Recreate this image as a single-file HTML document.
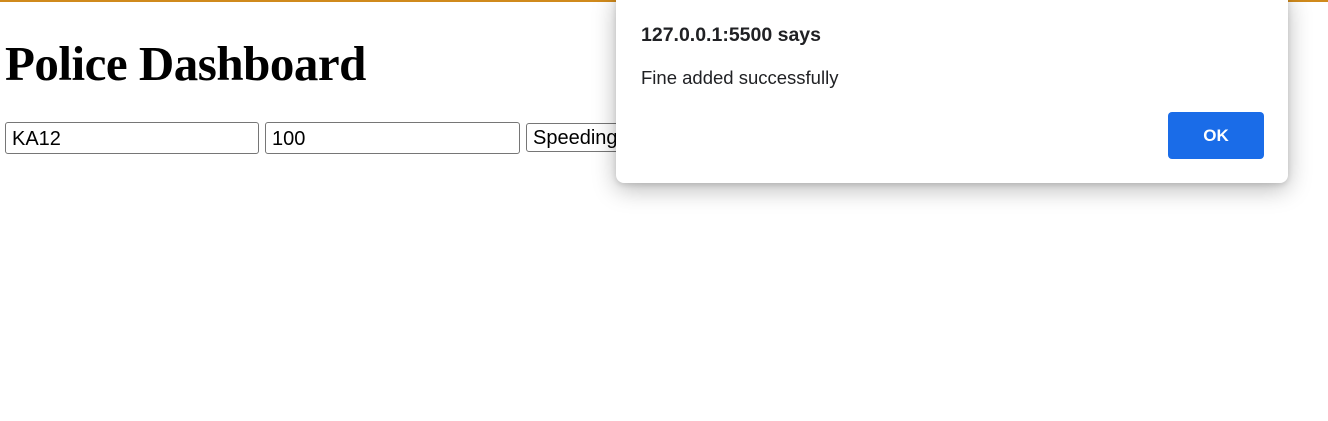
<!DOCTYPE html>
<html><head><meta charset="utf-8"><style>
html,body{margin:0;padding:0;background:#fff;width:1328px;height:421px;overflow:hidden;position:relative}
.bar{position:absolute;left:0;top:0;width:1328px;height:2px;background:#d08a1c}
h1{position:absolute;left:5px;top:39px;margin:0;font:bold 49px/1 "Liberation Serif",serif;color:#000;letter-spacing:-0.5px}
.inp{position:absolute;top:122px;height:32px;box-sizing:border-box;border:1px solid #767676;border-radius:3px;font:20px "Liberation Sans",sans-serif;padding:3px 6px;line-height:26px;color:#000;background:#fff}
.sel{position:absolute;left:526px;top:123px;width:140px;height:29px;box-sizing:border-box;border:1px solid #767676;border-radius:3px;font:20px "Liberation Sans",sans-serif;padding:0 6px;line-height:28px}
.dlg{position:absolute;left:616px;top:-8px;width:672px;height:191px;background:#fff;border-radius:8px;box-shadow:0 6px 24px rgba(0,0,0,.28),0 2px 6px rgba(0,0,0,.12)}
.t{position:absolute;left:25px;top:32px;font:bold 19.5px "Liberation Sans",sans-serif;color:#202124}
.m{position:absolute;left:25px;top:75px;font:18.5px "Liberation Sans",sans-serif;color:#202124}
.ok{position:absolute;left:552px;top:120px;width:96px;height:47px;background:#1a6ce8;border-radius:4px;color:#fff;font:bold 17px "Liberation Sans",sans-serif;text-align:center;line-height:47px}
</style></head><body>
<div class="bar"></div>
<h1>Police Dashboard</h1>
<div class="inp" style="left:5px;width:254px">KA12</div>
<div class="inp" style="left:265px;width:255px">100</div>
<div class="sel">Speeding</div>
<div class="dlg">
<div class="t">127.0.0.1:5500 says</div>
<div class="m">Fine added successfully</div>
<div class="ok">OK</div>
</div>
</body></html>
